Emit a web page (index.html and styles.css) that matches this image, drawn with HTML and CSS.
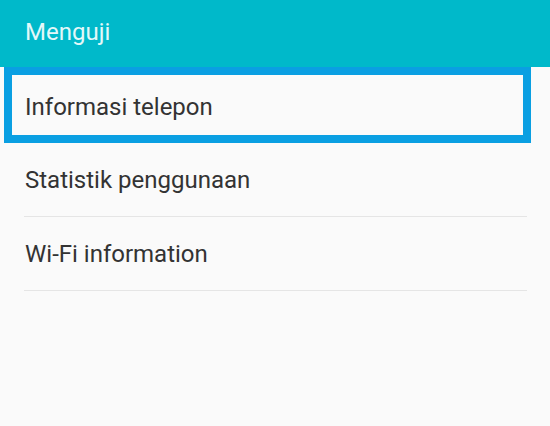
FILE: index.html
```html
<!DOCTYPE html>
<html lang="id">
<head>
    <meta charset="UTF-8">
    <meta name="viewport" content="width=device-width, initial-scale=1.0">
    <title>Menguji</title>
    <link rel="stylesheet" href="styles.css">
</head>
<body>
    <div class="app-bar">Menguji</div>

    <ul class="menu">
        <li class="menu-item selected">Informasi telepon</li>
        <li class="menu-item">Statistik penggunaan</li>
        <li class="menu-item">Wi-Fi information</li>
    </ul>
</body>
</html>
```

FILE: styles.css
```css
body {
    margin: 0;
    background: #fafafa;
    font-family: Roboto, "Liberation Sans", sans-serif;
    color: #333;
}
.app-bar {
    height: 67px;
    box-sizing: border-box;
    padding: 0 0 3px 25px;
    line-height: 64px;
    font-size: 24px;
    color: #e3f8f9;
    background: #00b9ca;
}
.menu {
    list-style: none;
    margin: 0;
    padding: 0;
}
.menu-item {
    margin: 0 23px 0 24px;
    padding: 22px 0 21px 1px;
    height: 30px;
    line-height: 30px;
    font-size: 24px;
    border-bottom: 1px solid #e5e5e5;
}
.menu-item.selected {
    margin: 0 19px 0 4px;
    padding: 17px 0 13px 13px;
    border: 8px solid #0a9fe2;
    background: #fafafa;
}
```
